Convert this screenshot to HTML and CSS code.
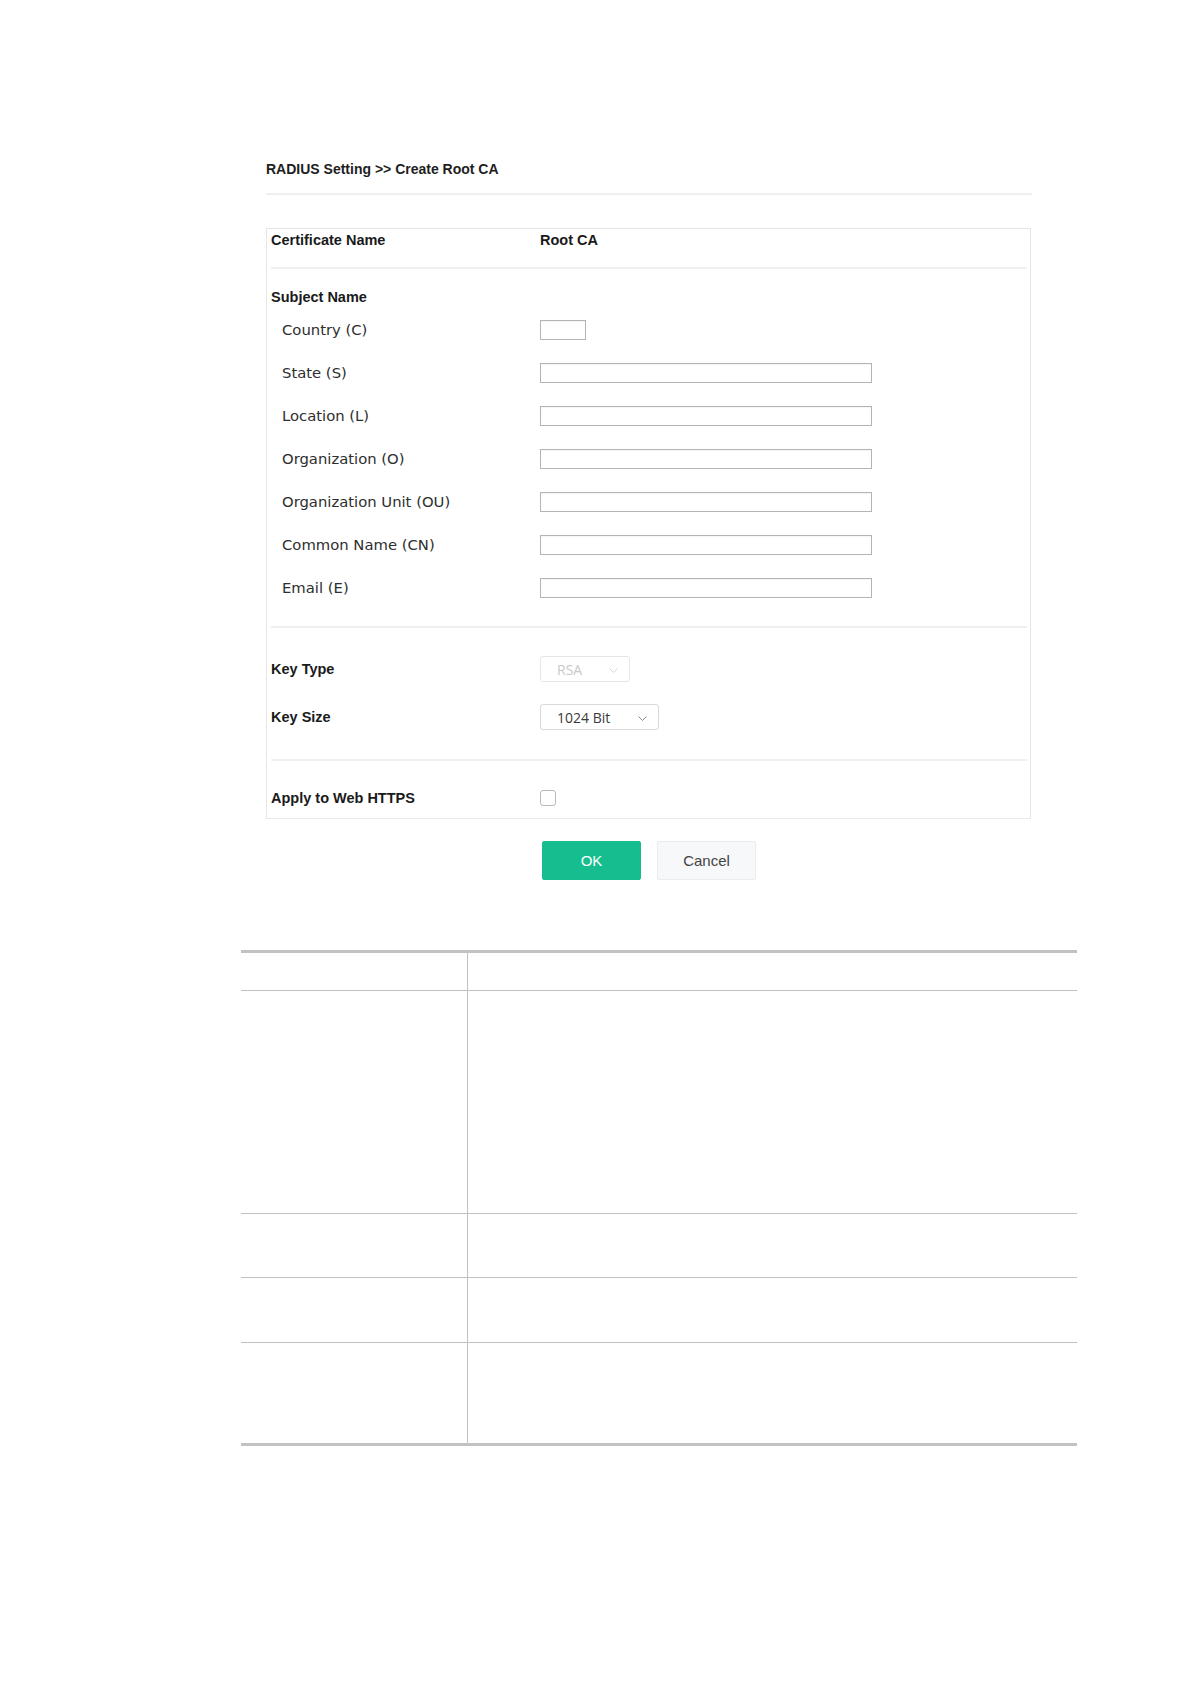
FILE: index.html
```html
<!DOCTYPE html>
<html lang="en">
<head>
    <meta charset="UTF-8">
    <title>RADIUS Setting - Create Root CA</title>
    <link rel="stylesheet" href="styles.css">
</head>
<body>
<div class="page">
    <div class="panel">
        <h1 class="title">RADIUS Setting &gt;&gt; Create Root CA</h1>
        <div class="rule"></div>

        <div class="box">
            <div class="row row-cert">
                <span class="label">Certificate Name</span>
                <span class="value">Root CA</span>
            </div>
            <div class="sep sep-cert"></div>

            <div class="row row-head">
                <span class="label">Subject Name</span>
            </div>
            <div class="row row-field">
                <span class="sublabel">Country (C)</span>
                <input class="field field-short" type="text">
            </div>
            <div class="row row-field">
                <span class="sublabel">State (S)</span>
                <input class="field" type="text">
            </div>
            <div class="row row-field">
                <span class="sublabel">Location (L)</span>
                <input class="field" type="text">
            </div>
            <div class="row row-field">
                <span class="sublabel">Organization (O)</span>
                <input class="field" type="text">
            </div>
            <div class="row row-field">
                <span class="sublabel">Organization Unit (OU)</span>
                <input class="field" type="text">
            </div>
            <div class="row row-field">
                <span class="sublabel">Common Name (CN)</span>
                <input class="field" type="text">
            </div>
            <div class="row row-field">
                <span class="sublabel">Email (E)</span>
                <input class="field" type="text">
            </div>
            <div class="sep sep-subject"></div>

            <div class="row row-key row-key-first">
                <span class="label">Key Type</span>
                <span class="select select-disabled">
                    <span class="select-text">RSA</span>
                    <svg class="chevron" width="9" height="5" viewBox="0 0 9 5"><path d="M0.5 0.5 L4.5 4.5 L8.5 0.5" fill="none" stroke="#d6d6d6" stroke-width="1"/></svg>
                </span>
            </div>
            <div class="row row-key">
                <span class="label">Key Size</span>
                <span class="select select-size">
                    <span class="select-text">1024 Bit</span>
                    <svg class="chevron" width="9" height="5" viewBox="0 0 9 5"><path d="M0.5 0.5 L4.5 4.5 L8.5 0.5" fill="none" stroke="#8a8a8a" stroke-width="1"/></svg>
                </span>
            </div>
            <div class="sep sep-key"></div>

            <div class="row row-apply">
                <span class="label">Apply to Web HTTPS</span>
                <span class="checkbox"></span>
            </div>
        </div>

        <div class="actions">
            <button class="btn btn-ok" type="button">OK</button>
            <button class="btn btn-cancel" type="button">Cancel</button>
        </div>
    </div>

    <div class="desc">
        <div class="cell cell-left h-1"></div>
        <div class="cell h-1"></div>
        <div class="cell cell-left h-2"></div>
        <div class="cell h-2"></div>
        <div class="cell cell-left h-3"></div>
        <div class="cell h-3"></div>
        <div class="cell cell-left h-4"></div>
        <div class="cell h-4"></div>
        <div class="cell cell-left h-5 last"></div>
        <div class="cell h-5 last"></div>
    </div>
</div>
</body>
</html>
```

FILE: styles.css
```css
body {
    margin: 0;
    background-color: #fff;
    font-family: "Liberation Sans", Arial, sans-serif;
    color: #1e1e1e;
}

.page {
    padding-top: 159px;
    padding-bottom: 200px;
}

.panel {
    margin-left: 266px;
    width: 766px;
}

.title {
    margin: 0;
    font-size: 14px;
    line-height: 20px;
    font-weight: bold;
    color: #1e1e1e;
}

.rule {
    margin-top: 14px;
    height: 2px;
    background-color: #f0f0f0;
}

.box {
    margin-top: 33px;
    width: 765px;
    box-sizing: border-box;
    border: 1px solid #e6e6e6;
    border-bottom-color: #e9e9e9;
    padding: 0 3px 0 4px;
}

.row {
    display: flex;
    align-items: center;
}

.label {
    width: 269px;
    flex-shrink: 0;
    font-size: 14.5px;
    font-weight: bold;
    color: #1a1a1a;
}

.value {
    font-size: 14.5px;
    font-weight: bold;
    color: #1a1a1a;
}

.sublabel {
    width: 258px;
    padding-left: 11px;
    flex-shrink: 0;
    font-family: "DejaVu Sans", Verdana, sans-serif;
    font-size: 14.8px;
    color: #2e2e2e;
}

.row-cert {
    height: 22px;
}

.sep {
    height: 2px;
    background-color: #f0f0f0;
}

.sep-cert {
    margin-top: 16px;
}

.row-head {
    margin-top: 17px;
    height: 22px;
}

.row-field {
    height: 43px;
}

.field {
    width: 332px;
    height: 20px;
    box-sizing: border-box;
    margin: 0;
    padding: 0 4px;
    border: 1px solid #b4b4b4;
    border-radius: 0;
    box-shadow: inset 0 1px 1px rgba(0, 0, 0, 0.04);
    background-color: #fff;
    outline: none;
}

.field-short {
    width: 46px;
}

.sep-subject {
    margin-top: 17px;
}

.row-key {
    height: 48px;
}

.row-key-first {
    margin-top: 17px;
}

.select {
    display: flex;
    align-items: center;
    justify-content: space-between;
    height: 26px;
    box-sizing: border-box;
    padding: 0 11px 0 16px;
    border: 1px solid #d9d9d9;
    border-radius: 3px;
    background-color: #fff;
    font-family: "Open Sans", sans-serif;
    font-size: 14px;
    color: #3a3a3a;
}

.select-disabled {
    width: 90px;
    border-color: #e6e6e6;
    color: #c9c9c9;
}

.select-size {
    width: 119px;
}

.chevron {
    margin-top: 2px;
}

.sep-key {
    margin-top: 18px;
}

.row-apply {
    margin-top: 17px;
    height: 40px;
}

.checkbox {
    width: 16px;
    height: 16px;
    box-sizing: border-box;
    border: 1px solid #b9b9b9;
    border-radius: 3px;
    background-color: #fff;
}

.actions {
    display: flex;
    gap: 16px;
    margin-top: 22px;
    padding-left: 276px;
}

.btn {
    width: 99px;
    height: 39px;
    box-sizing: border-box;
    border-radius: 2px;
    font-family: "Liberation Sans", Arial, sans-serif;
    font-size: 15px;
    cursor: pointer;
}

.btn-ok {
    border: 1px solid #16be8f;
    background-color: #16be8f;
    color: #fff;
}

.btn-cancel {
    border: 1px solid #ececec;
    background-color: #f7f8f9;
    color: #444;
}

/* description table below the form */
.desc {
    display: grid;
    grid-template-columns: 227px 1fr;
    margin-top: 70px;
    margin-left: 241px;
    width: 836px;
    border-top: 3px solid #c2c2c2;
    border-bottom: 3px solid #c2c2c2;
}

.cell {
    box-sizing: border-box;
    border-bottom: 1px solid #c0c0c0;
}

.cell-left {
    border-right: 1px solid #c0c0c0;
}

.cell.last {
    border-bottom: none;
}

.h-1 { height: 38px; }
.h-2 { height: 223px; }
.h-3 { height: 64px; }
.h-4 { height: 65px; }
.h-5 { height: 100px; }
```
